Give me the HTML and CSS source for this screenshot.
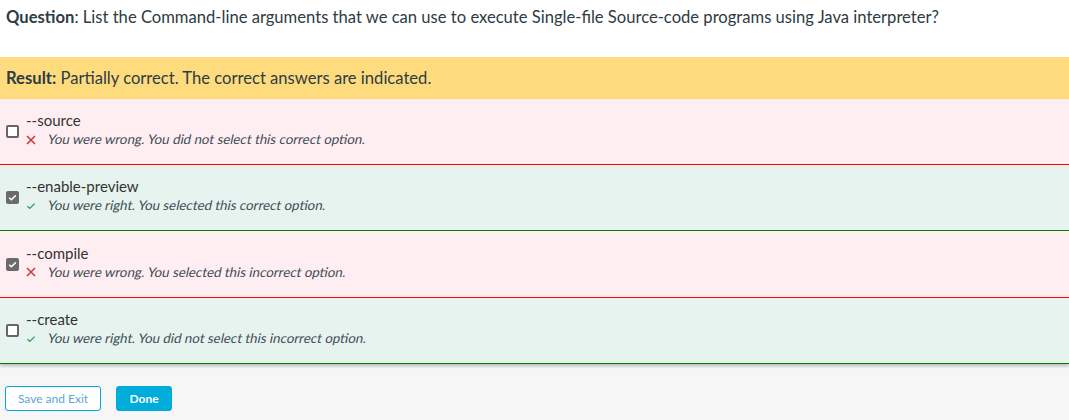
FILE: index.html
```html
<!DOCTYPE html>
<html>
<head>
<meta charset="utf-8">
<link rel="stylesheet" href="styles.css">
</head>
<body>
<div class="question"><b>Question</b>: List the Command-line arguments that we can use to execute Single-file Source-code programs using Java interpreter?</div>
<div class="result"><b>Result:</b> Partially correct. The correct answers are indicated.</div>
<div class="options">
  <div class="opt wrong">
    <span class="box"></span>
    <div class="txt">
      <div class="label">--source</div>
      <div class="fb"><span class="ic"><svg width="10" height="10" viewBox="0 0 10 10"><path d="M1 1L9 9M9 1L1 9" stroke="#d0383b" stroke-width="1.6" fill="none"/></svg></span><span class="msg">You were wrong. You did not select this correct option.</span></div>
    </div>
  </div>
  <div class="opt right">
    <span class="box checked"><svg width="13" height="13" viewBox="0 0 13 13"><path d="M3.2 6.8L5.4 8.8L9.8 4.4" stroke="#fff" stroke-width="1.5" fill="none"/></svg></span>
    <div class="txt">
      <div class="label">--enable-preview</div>
      <div class="fb"><span class="ic"><svg width="10" height="10" viewBox="0 0 10 10"><path d="M1.5 5.2L3.8 7.4L8.6 2.6" stroke="#2f9e4a" stroke-width="1.3" fill="none"/></svg></span><span class="msg">You were right. You selected this correct option.</span></div>
    </div>
  </div>
  <div class="opt wrong tall">
    <span class="box checked"><svg width="13" height="13" viewBox="0 0 13 13"><path d="M3.2 6.8L5.4 8.8L9.8 4.4" stroke="#fff" stroke-width="1.5" fill="none"/></svg></span>
    <div class="txt">
      <div class="label">--compile</div>
      <div class="fb"><span class="ic"><svg width="10" height="10" viewBox="0 0 10 10"><path d="M1 1L9 9M9 1L1 9" stroke="#d0383b" stroke-width="1.6" fill="none"/></svg></span><span class="msg">You were wrong. You selected this incorrect option.</span></div>
    </div>
  </div>
  <div class="opt right">
    <span class="box"></span>
    <div class="txt">
      <div class="label">--create</div>
      <div class="fb"><span class="ic"><svg width="10" height="10" viewBox="0 0 10 10"><path d="M1.5 5.2L3.8 7.4L8.6 2.6" stroke="#2f9e4a" stroke-width="1.3" fill="none"/></svg></span><span class="msg">You were right. You did not select this incorrect option.</span></div>
    </div>
  </div>
</div>
<div class="footer">
  <button class="btn outline">Save and Exit</button>
  <button class="btn primary">Done</button>
</div>
</body>
</html>
```
FILE: styles.css
```css
html, body {
  margin: 0;
  padding: 0;
  background: #f6f6f6;
  font-family: Lato, "Open Sans", sans-serif;
  color: #2d3b45;
}
.question {
  background: #fff;
  font-size: 16.6px;
  line-height: 20px;
  padding: 7px 6px 30px;
}
.result {
  background: #fedb7d;
  font-size: 16.6px;
  height: 42px;
  line-height: 42px;
  padding: 0 6px;
}
.options {
  box-shadow: 0 2px 3px rgba(0,0,0,0.25);
}
.opt {
  display: flex;
  align-items: center;
  height: 65px;
  padding-left: 6px;
}
.opt.tall { height: 66px; }
.opt.wrong {
  background: #ffeef1;
  border-bottom: 1px solid #ff0000;
}
.opt.right {
  background: #e6f3ee;
  border-bottom: 1px solid #008000;
}
.box {
  width: 13px;
  height: 13px;
  box-sizing: border-box;
  border: 2px solid #666;
  border-radius: 2px;
  background: #fff;
  display: flex;
  align-items: center;
  justify-content: center;
  flex-shrink: 0;
}
.box.checked {
  background: #6b6b6b;
  border-color: #6b6b6b;
}
.box.checked svg { flex-shrink: 0; }
.txt {
  margin-left: 7px;
  margin-top: -3px;
}
.label {
  font-size: 15px;
  line-height: 19px;
  color: #333;
}
.fb {
  display: flex;
  align-items: center;
  font-size: 13.3px;
  line-height: 19px;
  color: #3d4b56;
}
.ic {
  width: 20px;
  display: flex;
  align-items: center;
}
.msg {
  display: inline-block;
  transform: skewX(-12deg);
  transform-origin: 0 100%;
}
.footer {
  padding: 22px 5px;
  display: flex;
  gap: 15px;
}
.btn {
  font-family: Lato, "Open Sans", sans-serif;
  font-size: 12px;
  height: 25px;
  border-radius: 3px;
  cursor: pointer;
}
.outline {
  width: 96px;
  background: #fff;
  border: 1px solid #00a9d6;
  color: #5ba6d6;
}
.primary {
  width: 56px;
  background: #00acd9;
  border: 1px solid #00acd9;
  color: #fff;
  font-weight: bold;
}
```
